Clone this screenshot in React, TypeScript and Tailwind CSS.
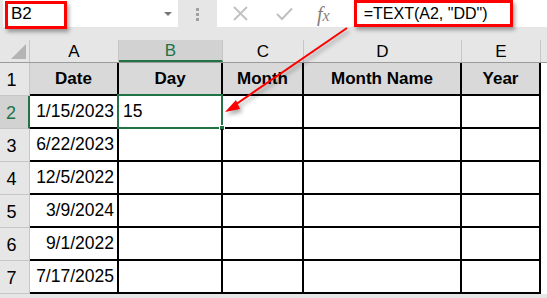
const cols = [
  { key: "A", w: "w-[89px]", head: "Date" },
  { key: "B", w: "w-[104px]", head: "Day" },
  { key: "C", w: "w-[81px]", head: "Month" },
  { key: "D", w: "w-[158px]", head: "Month Name" },
  { key: "E", w: "w-[79px]", head: "Year" },
];

const dates = ["1/15/2023", "6/22/2023", "12/5/2022", "3/9/2024", "9/1/2022", "7/17/2025"];

const FormulaBar = () => (
  <div className="flex h-[40px] bg-[#e6e6e6]">
    <div className="relative ml-[3px] flex h-[27px] w-[175px] items-center bg-white pl-[8px] text-[17px] text-black">
      B2
      <span className="absolute right-[6px] top-[12px] h-0 w-0 border-x-[4px] border-t-[4px] border-x-transparent border-t-[#777]" />
      <div className="absolute left-[2px] top-[1px] h-[28px] w-[62px] border-[3px] border-[#f00] shadow-[2px_3px_4px_rgba(0,0,0,0.35)]" />
    </div>
    <div className="flex w-[39px] flex-col items-center gap-[2px] pt-[8px]">
      <span className="h-[3px] w-[3px] bg-[#a0a0a0]" />
      <span className="h-[3px] w-[3px] bg-[#a0a0a0]" />
      <span className="h-[3px] w-[3px] bg-[#a0a0a0]" />
    </div>
    <div className="relative flex h-[27px] flex-1 items-center bg-white">
      <svg className="ml-[16px]" width="15" height="15" viewBox="0 0 15 15">
        <path d="M1 1L14 14M14 1L1 14" stroke="#c0c0c0" strokeWidth="1.8" />
      </svg>
      <svg className="ml-[28px]" width="17" height="14" viewBox="0 0 17 14">
        <path d="M1 7L6 12L16 1.5" stroke="#c0c0c0" strokeWidth="2" fill="none" />
      </svg>
      <span className="ml-[24px] font-['Liberation_Serif',serif] text-[20px] italic leading-none text-[#7f7f7f]">
        f<span className="text-[16px]">x</span>
      </span>
      <span className="ml-[34px] text-[16px] text-black">=TEXT(A2, "DD")</span>
      <div className="absolute left-[137px] top-0 h-[27px] w-[159px] border-[3px] border-[#f00] shadow-[2px_3px_4px_rgba(0,0,0,0.35)]" />
    </div>
  </div>
);

export default function App() {
  return (
    <div className="relative h-[298px] w-[547px] overflow-hidden bg-[#e6e6e6] font-['Liberation_Sans',Arial,sans-serif]">
      <FormulaBar />
      <div className="flex h-[23px] border-b border-[#9b9b9b]">
        <div className="relative w-[30px] border-r border-[#c6c6c6]">
          <svg className="absolute bottom-[3px] right-[3px]" width="15" height="15" viewBox="0 0 15 15">
            <path d="M15 0L15 15L0 15Z" fill="#b4b4b4" />
          </svg>
        </div>
        {cols.map((c) => (
          <div
            key={c.key}
            className={`${c.w} flex items-center justify-center border-r border-[#c6c6c6] pt-[2px] text-[17px] ${
              c.key === "B" ? "border-b-2 border-b-[#217346] bg-[#d2d2d2] text-[#217346]" : "text-black"
            }`}
          >
            {c.key}
          </div>
        ))}
        <div className="flex-1" />
      </div>
      <div className="flex">
        <div className="flex w-[30px] flex-col">
          {[1, 2, 3, 4, 5, 6, 7].map((n) => (
            <div
              key={n}
              className={`flex h-[33px] items-end justify-center border-b border-r border-[#c6c6c6] pb-[1px] pr-[6px] text-[18px] ${
                n === 2 ? "border-r-2 border-r-[#217346] bg-[#d2d2d2] text-[#217346]" : "text-black"
              }`}
            >
              {n}
            </div>
          ))}
        </div>
        <div className="flex flex-col">
          <div className="flex h-[33px] border-b-2 border-black bg-[#d9d9d9]">
            {cols.map((c) => (
              <div
                key={c.key}
                className={`${c.w} flex items-end justify-center border-r-2 border-black pb-[3px] text-[17px] font-bold text-black`}
              >
                {c.head}
              </div>
            ))}
          </div>
          {dates.map((d, i) => (
            <div key={d} className="flex h-[33px] border-b-2 border-black bg-white">
              {cols.map((c) => (
                <div
                  key={c.key}
                  className={`${c.w} relative flex items-end border-r-2 border-black pb-[3px] text-[17.5px] text-black ${
                    c.key === "A" ? "justify-end pr-[3px]" : "pl-[4px]"
                  }`}
                >
                  {c.key === "A" && d}
                  {c.key === "B" && i === 0 && (
                    <>
                      <span className="relative z-10">15</span>
                      <div className="absolute -bottom-[2px] -left-[2px] -right-[2px] -top-[2px] border-2 border-[#217346]" />
                      <div className="absolute -bottom-[4px] -right-[4px] h-[6px] w-[6px] border border-white bg-[#217346]" />
                    </>
                  )}
                </div>
              ))}
            </div>
          ))}
        </div>
        <div className="flex-1 bg-white" />
      </div>
      <svg
        className="pointer-events-none absolute left-0 top-0"
        width="547"
        height="298"
        style={{ filter: "drop-shadow(2px 3px 2px rgba(0,0,0,0.35))" }}
      >
        <line x1="347" y1="28" x2="232" y2="107" stroke="#f00" strokeWidth="2" />
        <path d="M225 112L236 100L240 109Z" fill="#f00" />
      </svg>
    </div>
  );
}
